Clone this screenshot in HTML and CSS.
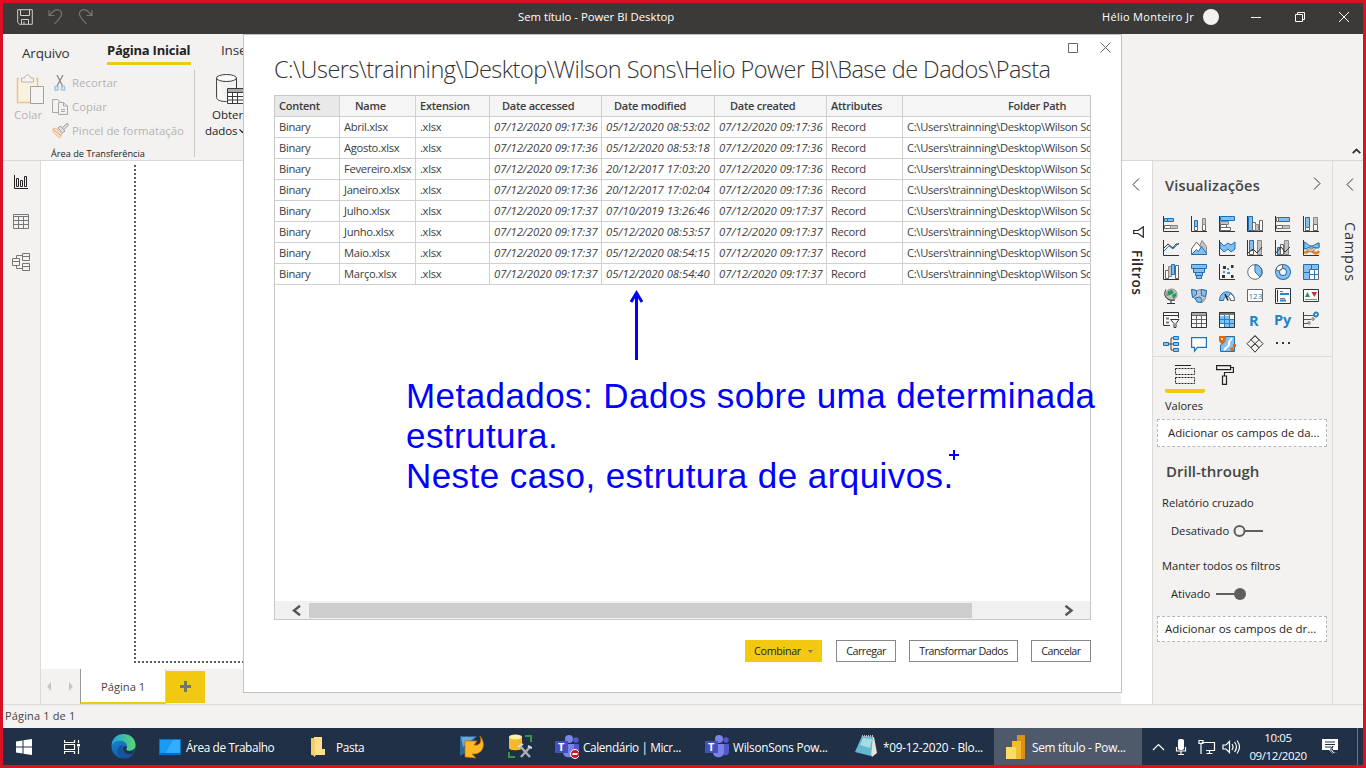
FILE: index.html
```html
<!DOCTYPE html>
<html lang="pt-BR">
<head>
<meta charset="utf-8">
<title>Sem título - Power BI Desktop</title>
<link rel="stylesheet" href="styles.css">
</head>
<body>
<div class="screen">
  <header class="titlebar">
    <div class="quick">
      <svg width="16" height="16" viewBox="0 0 16 16" fill="none" stroke="#d0cfcd"><path d="M.7.7h14.6v14.6H2.5L.7 13.500zM3.500 1v5.500h9V1M4.500 15v-4.500h7V15M7 15v-2.500"/></svg>
      <svg width="15" height="16" viewBox="0 0 15 16" fill="none" stroke="#777573" stroke-width="1.200"><path d="M1 1v5.500h5.500M1 6.500L5 2.500C9-1 14 1 13.500 5.500C13.300 8 11 10 6.500 15"/></svg>
      <svg width="15" height="16" viewBox="0 0 15 16" fill="none" stroke="#777573" stroke-width="1.200"><path d="M14 1v5.500H8.500M14 6.500L10 2.500C6-1 1 1 1.500 5.500C1.700 8 4 10 8.500 15"/></svg>
    </div>
    <div class="app-title">Sem título - Power BI Desktop</div>
    <div class="account"><span>Hélio Monteiro Jr</span><i class="avatar"></i></div>
    <svg class="winctl" width="100" height="12" viewBox="0 0 100 12" fill="none" stroke="#fff"><path d="M0 6.500h10M44.500 3.500h7v7h-7zM46.500 3.500v-2h7v7h-2M88 1l10 10M98 1L88 11"/></svg>
  </header>

  <section class="ribbon">
    <nav class="tabs"><span class="tab file">Arquivo</span><span class="tab home">Página Inicial</span><span class="tab">Inserir</span></nav>
    <div class="tools">
      <div class="paste">
        <svg width="28" height="31" viewBox="0 0 28 31" fill="none"><path d="M1.500 4.500h20V28.500h-20z" stroke="#efc08c" stroke-width="1.500" fill="#fbf1e0"/><path d="M3 4.500h17" stroke="#f2f1f0" stroke-width="3"/><path d="M5.500 8V4h3c.5-4 5.500-4 6 0h3v4z" fill="#f5f4f3" stroke="#b5b4b2"/><path d="M14.500 12.500h13v17h-13z" fill="#f5f4f3" stroke="#a2a1a0"/></svg>
        <span>Colar</span>
      </div>
      <div class="clip">
        <div class="cut"><svg width="16" height="16" viewBox="0 0 16 16" fill="none"><path d="M4 0l5.500 11M10 0L4 11" stroke="#8d8c8a" stroke-width="1.300"/><path d="M2 11.500h3v3.500H2zM8.500 11.500h3v3.500h-3z" stroke="#9dc6e2" stroke-width="1.400"/></svg>Recortar</div>
        <div><svg width="18" height="16" viewBox="0 0 18 16" fill="none" stroke="#aaa9a7"><path d="M6 13.500H.5V.5h5l3 2.500M6.500 3.500h5l4 3.500v8.500h-9zM11.500 3.500V7h4M9 10.500h4M9 12.500h4"/></svg>Copiar</div>
        <div><svg width="18" height="16" viewBox="0 0 18 16" fill="none"><path d="M1 5l4 1 5 5-2.500 4L1 9z" fill="#fbe3cb" stroke="#eeb98a"/><path d="M1 6.500L9 12.500" stroke="#e8a76e"/><path d="M6 5l2.500-2 4.500 5-2.500 2zM10.500 4.500L14.500.8h1.500v1.700l-4 4" fill="#e4e3e1" stroke="#9b9a98"/></svg>Pincel de formatação</div>
        <p>Área de Transferência</p>
      </div>
      <div class="getdata">
        <svg width="28" height="31" viewBox="0 0 28 31" fill="none" stroke="#3b3a39"><path d="M.6 4v19.500c0 2.500 4 4 9 4h1" fill="#fafafa"/><path d="M20.500 4v10"/><ellipse cx="10.500" cy="4" rx="10" ry="3.500" fill="#fafafa"/><path d="M11.500 14.500h17v15h-17z" fill="#fff"/><path d="M12 15h16v3H12z" fill="#aaa" stroke="none"/><path d="M11.500 18.500h17M11.500 22.500h17M11.500 26h17M16.500 18.500v11M21.500 18.500v11"/></svg>
        <span class="l1">Obter</span><span class="l2">dados<svg width="7" height="5" viewBox="0 0 7 5" fill="none" stroke="#222" stroke-width="1.200"><path d="M.5.5l3 3 3-3"/></svg></span>
      </div>
    </div>
    <svg class="collapse" width="9" height="6" viewBox="0 0 9 6" fill="none" stroke="#333" stroke-width="1.800"><path d="M.7 5.200l3.800-3.700 3.800 3.700"/></svg>
  </section>

  <main class="workspace">
    <aside class="rail">
      <svg width="18" height="16" viewBox="0 0 18 16" fill="none" stroke="#222"><path d="M2.500 1v13.500H16M4.500 4.500h2v8h-2zM8.500 6.500h2v6h-2zM12.500 2.500h2v10h-2z"/></svg>
      <svg width="18" height="17" viewBox="0 0 18 17" fill="none" stroke="#777"><path d="M1.500 1.500h15v14h-15zM1.500 3.500h15M1.500 7.500h15M1.500 11.500h15M6.500 3.500v12M11.500 3.500v12"/></svg>
      <svg width="18" height="18" viewBox="0 0 18 18" fill="none" stroke="#777"><path d="M.5 5.500h7v7h-7zM.5 8.500h7M10.500.5h7v7h-7zM10.500 3.500h7M10.500 10.500h7v7h-7zM10.500 13.500h7M4.500 5.500v-3h6M4.500 12.500v3h6"/></svg>
    </aside>
    <section class="report">
      <div class="canvas"><div class="sheet"></div></div>
      <div class="pages">
        <svg width="39" height="10" viewBox="0 0 39 10" fill="#c8c6c4"><path d="M10 0v9L6 4.500zM28 0v9l4-4.500z"/></svg>
        <span class="page">Página 1</span>
        <span class="add"><svg width="11" height="11" viewBox="0 0 11 11"><path d="M5.500 0v11M0 5.500h11" stroke="#75736e" stroke-width="3"/></svg></span>
      </div>
    </section>
    <aside class="filters">
      <svg width="8" height="13" viewBox="0 0 8 13" fill="none" stroke="#333"><path d="M7 .5l-6 6 6 6"/></svg>
      <svg class="funnel" width="11" height="12" viewBox="0 0 11 12" fill="none" stroke="#222" stroke-width="1.200"><path d="M10.300.8v10.400L5 7.500H.7v-3H5z"/></svg>
      <b>Filtros</b>
    </aside>
    <aside class="viz">
      <div class="viz-head"><span>Visualizações</span><svg width="8" height="13" viewBox="0 0 8 13" fill="none" stroke="#333"><path d="M1 .5l6 6-6 6"/></svg></div>
      <div class="gallery">
        <svg viewBox="0 0 16 16"><path class="b" d="M1.500 2.500h3v3h-3z M4.500 2.500h6v3h-6z"/><path class="w" d="M1.500 9.500h6v3h-6z"/><path class="g" d="M7.500 9.500h7v3h-7z"/><path class="k" d="M.5 0v15.500H16"/></svg>
        <svg viewBox="0 0 16 16"><path class="w" d="M3.500 10.500h3v4h-3z"/><path class="b" d="M3.500 4.500h3v6h-3z"/><path class="w" d="M11.500 8.500h3v6h-3z"/><path class="g" d="M11.500 2.500h3v6h-3z"/><path class="k" d="M.5 0v15.500H16"/></svg>
        <svg viewBox="0 0 16 16"><path class="b" d="M1.500.5h14v4h-14z"/><path class="g" d="M1.500 5.500h8v3h-8z"/><path class="w" d="M1.500 8.500h6v3h-6zM1.500 11.500h10v3h-10z"/><path class="k" d="M.5 0v15.500H16"/></svg>
        <svg viewBox="0 0 16 16"><path class="b" d="M1.500.5h4v14h-4z"/><path class="w" d="M5.500 6.500h3v8h-3z"/><path class="g" d="M8.500 8.500h3v6h-3z"/><path class="w" d="M12.500 4.500h3v10h-3z"/><path class="k" d="M.5 0v15.500H16"/></svg>
        <svg viewBox="0 0 16 16"><path class="b" d="M3.500 1.500h11v4h-11z"/><path class="w" d="M1.500 1.500h2v4h-2z"/><path class="g" d="M7.500 9.500h7v3h-7z"/><path class="w" d="M1.500 9.500h6v3h-6z"/><path class="k" d="M.5 0v15.500H16"/></svg>
        <svg viewBox="0 0 16 16"><path class="b" d="M2.500 1.500h4v10h-4z"/><path class="w" d="M2.500 11.500h4v3h-4z"/><path class="g" d="M10.500 1.500h4v7h-4z"/><path class="w" d="M10.500 8.500h4v6h-4z"/><path class="k" d="M.5 0v15.500H16"/></svg>

        <svg viewBox="0 0 16 16"><path class="bl" d="M1 11l5-5 4 3 6-6"/><path class="k" d="M1 8l4-4 5 4 3-4h3M.5 0v15.500H16"/></svg>
        <svg viewBox="0 0 16 16"><path class="g" d="M5 14.500L11 .5l4.500 6v8z"/><path class="w" d="M.5 9l5-7 5 6-4 6.500h-6z"/><path class="b" d="M.5 14.500l5-5 2 2 3-5 5 7v1z"/></svg>
        <svg viewBox="0 0 16 16"><path class="b" d="M1 2l4 4 4-3 3 2 4-3v7l-4 3-3-3-4 3-4-4z"/><path class="k" d="M.5 0v15.500H16"/></svg>
        <svg viewBox="0 0 16 16"><path class="b" d="M2.500.5h4v10h-4z"/><path class="w" d="M2.500 10.500h4v4h-4z"/><path class="g" d="M10.500.5h4v14h-4z"/><path class="k" d="M1 13l5-4 4 4 5-6M.5 0v15.500H16"/></svg>
        <svg viewBox="0 0 16 16"><path class="b" d="M2.500 7.500h3v7h-3z"/><path class="w" d="M5.500 4.500h3v10h-3z"/><path class="g" d="M9.500.5h4v14h-4z"/><path class="k" d="M1 13l5-6 4 5 5-5M.5 0v15.500H16"/></svg>
        <svg viewBox="0 0 16 16"><path d="M1 12c4 2 5-4 8-1s5 3 7 0" fill="none" stroke="#e8811c" stroke-width="3"/><path class="g" d="M1 4c4 0 4 5 7 5s4-6 8-6v4c-4 0-5 5-8 5s-4-4-7-4z"/><path class="b" d="M1 2c4 1 4 4 7 4s4-2 8-3v5c-4 0-5-1-8-1s-4 2-7 2z"/><path class="k" d="M.5 0v15.500H16"/></svg>

        <svg viewBox="0 0 16 16"><path class="w" d="M2.500 6.500h3v8h-3z"/><path class="g" d="M5.500 2.500h3v10h-3z"/><path class="b" d="M8.500.5h3v10h-3z"/><path class="w" d="M12.500 1.500h3v13h-3z"/><path class="k" d="M.5 0v15.500H16"/></svg>
        <svg viewBox="0 0 16 16"><path class="b" d="M.5.5h15v4H.5zM2.500 4.500h11v4h-11zM4.500 8.500h7v3h-7zM5.500 11.500h5v3h-5z"/></svg>
        <svg viewBox="0 0 16 16"><g fill="#333"><path d="M4 2h3v3H4zM12 1h2.500v3H12zM3 11h3v3H3zM12 11h2.500v3H12z"/></g><path d="M8 4h2v2H8zM4 7h2v2H4zM8 8h3v2H8z" fill="#3d94d6"/><path class="k" d="M.5 0v15.500H16"/></svg>
        <svg viewBox="0 0 16 16"><circle class="w" cx="8" cy="8" r="7.300"/><path class="b" d="M8 .7a7.300 7.300 0 0 1 5 12.300L8 8z"/></svg>
        <svg viewBox="0 0 16 16"><circle cx="8" cy="8" r="5.500" fill="none" stroke="#1e70b5" stroke-width="5"/><circle cx="8" cy="8" r="5.500" fill="none" stroke="#84bff0" stroke-width="3.200"/><path class="w" d="M7.500.5A7 7 0 0 0 1 6l3.500 1A4 4 0 0 1 7.500 4.500z"/></svg>
        <svg viewBox="0 0 16 16"><path class="b" d="M.5.500h8v8h-8zM.5 8.500h6v7h-6zM8.500.5h7v5h-7z"/><path class="w" d="M6.500 5.500h9v10h-9z"/><path class="bl" d="M6.500 10.500h9M11.500 5.500v10"/></svg>

        <svg viewBox="0 0 16 16"><circle cx="8.500" cy="6.500" r="5.500" class="g"/><path d="M5 3l4-1 2 3-4 2-3 1zM9 7l4-2v3l-3 3z" fill="#239b56"/><path class="k" d="M3 1.500C-1 8 5 14 12 12M8 12.500v3M4 15.500h8"/></svg>
        <svg viewBox="0 0 16 16"><path class="g" d="M.5 1.500l5 1 4-1 6 1-1 8-3 4-5-1-5-5z"/><path class="b" d="M.5 1.500l5 1v4l-4 3zM10 1.500l5.500 1-1 6-4-1zM4 10l5-1 2 3-1 2.500-4-.5z"/></svg>
        <svg viewBox="0 0 16 16"><path class="b" d="M.5 12.500C.5 1 15.500 1 15.500 12.500h-4C11 7 5 7 4.500 12.500z"/><path class="w" d="M11 5.500c3 1 4.500 4 4.500 7h-4c0-2-1-3-2-4z"/><path d="M6 6l3 6.500" stroke="#222" stroke-width="1.500"/></svg>
        <svg viewBox="0 0 16 16"><path class="w" d="M.5 1.500h15v12H.5z"/><text x="1.500" y="10.500" font-size="8" fill="#1480c5">123</text></svg>
        <svg viewBox="0 0 16 16"><path class="k w" d="M.5.5h15v15H.5z"/><path d="M5 3.500h3M5 10.500h5" stroke="#777"/><path d="M5 6h9M5 12.500h6" stroke="#2b83c8" stroke-width="2"/><path class="k" d="M2.500 2v12"/></svg>
        <svg viewBox="0 0 16 16"><path class="k w" d="M.5 1.500h15v12H.5z"/><path d="M2 9l2.500-5L7 9z" fill="#219653"/><path d="M8.500 4H14l-2.700 5z" fill="#dc2635"/><path d="M2 11.500h12" stroke="#888"/></svg>

        <svg viewBox="0 0 16 16"><path class="k w" d="M7 13.500H.5V.5h15V6M.5 3.500h15"/><path d="M3 6.500h3M3 10.500h3" stroke="#777" stroke-width="2"/><path class="k w" d="M7.500 7.500h8.500l-3 4v4h-2v-4z"/></svg>
        <svg viewBox="0 0 16 16"><path class="k w" d="M.5.5h15v15H.5z"/><path d="M1 2h14" stroke="#aaa" stroke-width="2"/><path d="M1 3.500h14M1 7.500h14M1 11.500h14M5.500 3v12M10.500 3v12" stroke="#666"/></svg>
        <svg viewBox="0 0 16 16"><path class="w" d="M.5.5h15v15H.5z"/><path d="M1 4h9v7H1zM6 7h9v8H6z" fill="#84bff0"/><path d="M1 2h14" stroke="#777" stroke-width="2"/><path class="bl" d="M.5 7.500h15M.5 11.500h15M5.500 3v12M10.500 3v12"/><path class="k" d="M.5.5h15M.5.5v15h15v-15"/></svg>
        <svg viewBox="0 0 16 16"><text x="2" y="13.500" font-size="14.500" font-weight="bold" fill="#2185c5">R</text></svg>
        <svg viewBox="0 0 16 16"><text x="-1" y="12.500" font-size="14.500" font-weight="bold" fill="#2185c5">Py</text></svg>
        <svg viewBox="0 0 16 16"><path class="k" d="M.5 0v15.500H16"/><path d="M1 3.500h10M1 7.500h7M1 11.500h4" stroke="#555"/><circle cx="13" cy="2.500" r="2" fill="none" stroke="#2185c5" stroke-width="1.800"/><circle cx="10" cy="7" r="1.200" class="w"/><circle cx="6" cy="11" r="1.200" class="w"/></svg>

        <svg viewBox="0 0 16 16"><path class="b" d="M.5 6.500h5v3h-5zM10.500.5h5v3h-5zM10.500 6.500h5v3h-5zM10.500 12.500h5v3h-5z"/><path d="M5.500 8h5M10 2H8v12h2" fill="none" stroke="#444"/></svg>
        <svg viewBox="0 0 16 16"><path d="M.6 1.600h14.800v9.800H6.500L3.500 15v-3.600H.6z" fill="#fff" stroke="#1c73b9" stroke-width="1.200"/></svg>
        <svg viewBox="0 0 16 16"><path class="b" d="M6.500.5h9v15h-14V9l4-3z"/><path d="M13 2l-3 4v3l-5 5" stroke="#fff" stroke-width="2" fill="none"/><path d="M0 0h6v5L3 9 0 5zM11 12l3-1 1 4h-3zM14 8h3v3h-3z" fill="#dd6b10"/><circle cx="3" cy="3" r="1" fill="#fff"/></svg>
        <svg viewBox="0 0 18 18" class="big"><path class="k" d="M9 .7l4 4-8 8-4-4zM9 .7l-4 4 8 8 4-4zM9 8.700l4 4-4 4.500-4-4.500z" stroke-width="1.300"/></svg>
        <svg viewBox="0 0 16 16"><path d="M1 6h2v2H1zM7 6h2v2H7zM13 6h2v2h-2z" fill="#333"/></svg>
      </div>
      <div class="modes">
        <span class="on"><svg width="20" height="20" viewBox="0 0 20 20" fill="none" stroke="#222"><path d="M0 .5h16"/><path stroke-dasharray="2 1" d="M.5 3.500h19v6H.5zM.5 12.500h19v6H.5z"/></svg></span>
        <svg width="18" height="20" viewBox="0 0 18 20" fill="none" stroke="#222" stroke-width="1.200"><path d="M.6.6h14v4H.6zM15 2.500h2.400v5H8.500V11M6.500 11h4v8.400h-4z"/></svg>
      </div>
      <p class="lbl values">Valores</p>
      <div class="well first">Adicionar os campos de da...</div>
      <h3>Drill-through</h3>
      <p class="lbl">Relatório cruzado</p>
      <p class="toggle"><span>Desativado</span><svg width="31" height="14" viewBox="0 0 31 14" fill="none" stroke="#605e5c" stroke-width="2"><path d="M12 7h18"/><circle cx="6.500" cy="7" r="5"/></svg></p>
      <p class="lbl keep">Manter todos os filtros</p>
      <p class="toggle second"><span>Ativado</span><svg width="31" height="14" viewBox="0 0 31 14"><path d="M0 7h20" stroke="#605e5c" stroke-width="2"/><circle cx="24" cy="7" r="6" fill="#605e5c"/></svg></p>
      <div class="well">Adicionar os campos de dr...</div>
    </aside>
    <aside class="fields">
      <svg width="8" height="13" viewBox="0 0 8 13" fill="none" stroke="#333"><path d="M7 .5l-6 6 6 6"/></svg>
      <b>Campos</b>
    </aside>
  </main>

  <footer class="status">Página 1 de 1</footer>

  <nav class="taskbar">
    <svg width="16" height="16" viewBox="0 0 16 16" fill="#fff"><path d="M0 2.500l6.500-1v6H0zM7.500 1.300L16 0v7.500H7.500zM0 8.500h6.500v6l-6.500-1zM7.500 8.500H16V16l-8.500-1.300z"/></svg>
    <svg width="17" height="16" viewBox="0 0 17 16" fill="none" stroke="#fff"><path d="M.5 1v2.500h10V1M.5 5.500h10v5H.5zM.5 15v-2.500h10V15M14.500 1v3M14.500 8v7" stroke-width="1.200"/><path d="M13 5h3v2.500h-3z" fill="#fff" stroke="none"/></svg>
    <svg width="25" height="25" viewBox="0 0 25 25"><defs><linearGradient id="e1" x2="1"><stop stop-color="#1fa5e3"/><stop offset="1" stop-color="#59d66b"/></linearGradient><linearGradient id="e2" y2="1" x2=".4"><stop stop-color="#1d8ad8"/><stop offset="1" stop-color="#0e5ca8"/></linearGradient></defs><circle cx="12.500" cy="12.500" r="12" fill="url(#e2)"/><path d="M.6 11C2-4 24-3 24.500 11c.2 5-4.500 7-8.500 5.500-2-1 0-2 0-4C16 5 4 5 .6 11z" fill="url(#e1)"/><path d="M12 11c-3 4 1 10 10.500 8-3 5-8 6-11 5C4 21 6 11 12 11z" fill="#1553a0"/><path d="M16 12.500c0 2-2 3 0 4 3 1 6 0 8-2.500-1 3-2 5-3 5.500-5 2-10-2-9-7z" fill="#203047"/></svg>
    <span class="task desk"><svg width="22" height="16" viewBox="0 0 22 16"><path d="M.5.5h21v15H.5z" fill="#159cf8" stroke="#0874c7"/><path d="M14 1h7v14H6z" fill="#35adff"/><path d="M1 14.500h20" stroke="#0765b1"/></svg><span>Área de Trabalho</span></span>
    <span class="task folder"><svg width="15" height="20" viewBox="0 0 15 20"><path d="M0 1h10v17H0z" fill="#e8b84a"/><path d="M3 0h8v12h3v6H5l-2 2z" fill="#ffe08a"/><path d="M0 1l4 2v17l-4-3z" fill="#f5cc68"/></svg><span>Pasta</span></span>
    <svg width="24" height="24" viewBox="0 0 24 24"><path d="M0 1h17l-4 5-7 2-1 10-5 3z" fill="#2a689f"/><path d="M1 2h14L3 12z" fill="#6fa7d1"/><path d="M5 6h12l-3 4c6 1 8-3 6-9 6 7 4 17-5 18h-3l4 4-11-1z" fill="#fdb924" stroke="#bd6c05" stroke-width=".7"/></svg>
    <svg width="24" height="25" viewBox="0 0 24 25"><path d="M1 3v11c0 3 13 3 13 0V3z" fill="#f5b92a"/><ellipse cx="7.500" cy="3" rx="6.500" ry="2.500" fill="#fff0a7"/><path d="M17 2h6v6M1 18v5h6" fill="none" stroke="#329645" stroke-width="2"/><path d="M13 23l9-10M12 12l10 11" stroke="#a9aeb2" stroke-width="2.500"/><path d="M10 13l5-3M20 12l4 2" stroke="#ddd" stroke-width="2"/></svg>
    <span class="task teams"><svg width="24" height="24" viewBox="0 0 24 24"><circle cx="14" cy="4" r="4" fill="#7b83eb"/><circle cx="21" cy="5" r="2.700" fill="#5059c9"/><path d="M18 9h6v8c0 4-5 4-6 2z" fill="#5059c9"/><path d="M8 9h11v8c0 7-11 7-11 0z" fill="#7b83eb"/><path d="M0 6h13v12H0z" fill="#4650bd"/><text x="3" y="16" font-size="11" font-weight="bold" fill="#fff">T</text><circle cx="20" cy="19" r="4.500" fill="#c5172c" stroke="#fff"/><path d="M17.500 19h5" stroke="#fff" stroke-width="2"/></svg><span>Calendário | Micr...</span></span>
    <span class="task teams2"><svg width="24" height="24" viewBox="0 0 24 24"><circle cx="14" cy="4" r="4" fill="#7b83eb"/><circle cx="21" cy="5" r="2.700" fill="#5059c9"/><path d="M18 9h6v8c0 4-5 4-6 2z" fill="#5059c9"/><path d="M8 9h11v8c0 7-11 7-11 0z" fill="#7b83eb"/><path d="M0 6h13v12H0z" fill="#4650bd"/><text x="3" y="16" font-size="11" font-weight="bold" fill="#fff">T</text></svg><span>WilsonSons Pow...</span></span>
    <span class="task note"><svg width="23" height="23" viewBox="0 0 23 23"><path d="M7 1l12 1 3 16-5 4z" fill="#e8e4d8"/><path d="M7 1l11 1-2 19L0 17z" fill="#62b9cf"/><path d="M8 3l9 1-2 9-10-3z" fill="#a7dce5"/><path d="M7 1h12" stroke="#bbb" stroke-width="2" stroke-dasharray="1 1"/></svg><span>*09-12-2020 - Blo...</span></span>
    <span class="task active"><svg width="20" height="24" viewBox="0 0 20 24"><path d="M11 0h8v24h-8z" fill="#d99213"/><path d="M6 6h9v18H6z" fill="#f2bd2b"/><path d="M0 12h10v12H0z" fill="#fbdd61"/></svg><span>Sem título - Pow...</span></span>
    <span class="tray">
      <svg width="90" height="18" viewBox="0 0 90 18" fill="none" stroke="#fff" stroke-width="1.200"><path d="M1 12l5.500-5.500L12 12"/><rect x="26" y="1" width="6" height="11" rx="2" fill="#fff" stroke="none"/><path d="M24.500 9v4h9V9M29 13v3M26 16.500h6M49.500 4.500h13v8H54M54.500 15.500h6M57.500 12.500v3M47 2.500h4v3h-4zM49 6v10M71 7h3l3.500-3.500v11L74 11h-3zM80 6q2 3 0 6M82.500 4q4 5 0 10M85 2.500q5 6.500 0 13"/></svg>
      <span class="clock">10:05<br>09/12/2020</span>
      <svg width="17" height="17" viewBox="0 0 17 17"><path d="M0 1h16v11h-5v4l-4-4H0z" fill="#fff"/><path d="M3 4h10M3 6.500h10M3 9h6" stroke="#203047"/><path d="M11 8a4 4 0 1 0 5 6 4 4 0 0 1-5-6z" fill="#fff" stroke="#203047"/></svg>
      <i class="peek"></i>
    </span>
  </nav>

  <section class="dialog">
    <svg class="dlg-ctl" width="44" height="12" viewBox="0 0 44 12" fill="none" stroke="#666"><path d="M.5 1.500h9v9h-9zM32.500.5l10 10M42.500.5l-10 10"/></svg>
    <h1>C:\Users\trainning\Desktop\Wilson Sons\Helio Power BI\Base de Dados\Pasta</h1>
    <div class="grid">
      <table>
        <colgroup><col class="c1"><col class="c2"><col class="c3"><col class="c4"><col class="c5"><col class="c4"><col class="c2"><col class="c6"></colgroup>
        <tr><th class="sel">Content</th><th class="name">Name</th><th>Extension</th><th class="date">Date accessed</th><th class="date">Date modified</th><th class="date created">Date created</th><th>Attributes</th><th class="path">Folder Path</th></tr>
        <tr><td>Binary</td><td>Abril.xlsx</td><td>.xlsx</td><td class="d">07/12/2020 09:17:36</td><td class="d">05/12/2020 08:53:02</td><td class="d">07/12/2020 09:17:36</td><td>Record</td><td>C:\Users\trainning\Desktop\Wilson Sons</td></tr>
        <tr><td>Binary</td><td>Agosto.xlsx</td><td>.xlsx</td><td class="d">07/12/2020 09:17:36</td><td class="d">05/12/2020 08:53:18</td><td class="d">07/12/2020 09:17:36</td><td>Record</td><td>C:\Users\trainning\Desktop\Wilson Sons</td></tr>
        <tr><td>Binary</td><td>Fevereiro.xlsx</td><td>.xlsx</td><td class="d">07/12/2020 09:17:36</td><td class="d">20/12/2017 17:03:20</td><td class="d">07/12/2020 09:17:36</td><td>Record</td><td>C:\Users\trainning\Desktop\Wilson Sons</td></tr>
        <tr><td>Binary</td><td>Janeiro.xlsx</td><td>.xlsx</td><td class="d">07/12/2020 09:17:36</td><td class="d">20/12/2017 17:02:04</td><td class="d">07/12/2020 09:17:36</td><td>Record</td><td>C:\Users\trainning\Desktop\Wilson Sons</td></tr>
        <tr><td>Binary</td><td>Julho.xlsx</td><td>.xlsx</td><td class="d">07/12/2020 09:17:37</td><td class="d">07/10/2019 13:26:46</td><td class="d">07/12/2020 09:17:37</td><td>Record</td><td>C:\Users\trainning\Desktop\Wilson Sons</td></tr>
        <tr><td>Binary</td><td>Junho.xlsx</td><td>.xlsx</td><td class="d">07/12/2020 09:17:37</td><td class="d">05/12/2020 08:53:57</td><td class="d">07/12/2020 09:17:37</td><td>Record</td><td>C:\Users\trainning\Desktop\Wilson Sons</td></tr>
        <tr><td>Binary</td><td>Maio.xlsx</td><td>.xlsx</td><td class="d">07/12/2020 09:17:37</td><td class="d">05/12/2020 08:54:15</td><td class="d">07/12/2020 09:17:37</td><td>Record</td><td>C:\Users\trainning\Desktop\Wilson Sons</td></tr>
        <tr><td>Binary</td><td>Março.xlsx</td><td>.xlsx</td><td class="d">07/12/2020 09:17:37</td><td class="d">05/12/2020 08:54:40</td><td class="d">07/12/2020 09:17:37</td><td>Record</td><td>C:\Users\trainning\Desktop\Wilson Sons</td></tr>
      </table>
      <div class="scroll">
        <svg width="10" height="11" viewBox="0 0 10 11" fill="none" stroke="#555" stroke-width="2.400"><path d="M9 .8L3 5.500l6 4.700"/></svg>
        <i></i>
        <svg width="10" height="11" viewBox="0 0 10 11" fill="none" stroke="#555" stroke-width="2.400"><path d="M1.500.8l6 4.700-6 4.700"/></svg>
      </div>
    </div>
    <div class="buttons"><span class="btn primary">Combinar<svg width="5" height="3" viewBox="0 0 5 3"><path d="M0 0h5L2.500 3z" fill="#777"/></svg></span><span class="btn b2">Carregar</span><span class="btn b3">Transformar Dados</span><span class="btn b4">Cancelar</span></div>
  </section>

  <svg class="arrow" width="16" height="72" viewBox="0 0 16 72" fill="none" stroke="#00f" stroke-width="3"><path d="M7.500 71V4M2 13l5.500-9L13 13"/></svg>
  <div class="annotation">Metadados: Dados sobre uma determinada<br>estrutura.<br>Neste caso, estrutura de arquivos.</div>
  <svg class="cursor" width="10" height="10" viewBox="0 0 10 10" stroke="#00f" stroke-width="2"><path d="M5 0v10M0 5h10"/></svg>
</div>
</body>
</html>
```
FILE: styles.css
```css
* { box-sizing: border-box; }
body { margin: 0; overflow: hidden; font: 11px/16px "Open Sans", "Noto Sans", sans-serif; color: #252423; }
p, h1, h3 { margin: 0; font-weight: 400; }
svg { display: block; flex: none; }
.screen { position: relative; width: 1366px; height: 768px; border: 3px solid #d81224; background: #f3f2f1; display: flex; flex-direction: column; white-space: nowrap; }

.titlebar { height: 31px; background: #3b3a38; color: #fff; display: grid; grid-template-columns: 515px 584px 149px 112px; align-items: center; padding-bottom: 3px; }
.quick { display: flex; gap: 15px; padding-left: 14px; }
.app-title { font-size: 11.3px; }
.account { display: flex; align-items: center; gap: 9px; letter-spacing: .3px; }
.avatar { width: 16px; height: 16px; border-radius: 50%; background: #f3f2f1; }

.ribbon { height: 127px; position: relative; border-bottom: 1px solid #d9d8d6; display: flex; flex-direction: column; }
.tabs { height: 36px; display: flex; font-size: 13.5px; letter-spacing: -.2px; padding: 7px 0 0 19px; color: #333; }
.tab { line-height: 18px; height: 24px; }
.file { width: 85px; padding-top: 3px; }
.home { width: 84px; margin-right: 30px; font-weight: 700; color: #222; height: 24px; border-bottom: 3px solid #f2c811; font-size: 13px; letter-spacing: -.22px; }
.tools { display: flex; color: #b5b3b1; }
.paste { width: 47px; padding: 4px 0 0 13px; }
.paste span { display: block; margin: 2px 0 0 -2px; font-size: 11.5px; }
.clip { width: 145px; height: 87px; border-right: 1px solid #c8c6c4; padding-top: 1px; }
.clip div { display: flex; align-items: center; height: 24px; font-size: 11.4px; }
.clip svg { margin: 0 2px; width: 18px; }
.clip .cut svg { width: 16px; margin-left: 3px; margin-right: 3px; }
.clip p { font-size: 9.2px; line-height: 14px; margin-left: 1px; color: #222; padding-top: 4px; }
.getdata { padding: 4px 0 0 21px; color: #222; font-size: 11.5px; }
.getdata span { display: block; }
.l1 { margin: 2px 0 0 -4px; }
.getdata .l2 { margin-left: -11px; display: flex; align-items: center; gap: 2px; letter-spacing: -.1px; }
.collapse { position: absolute; right: 2px; bottom: 6px; }

.workspace { flex: 1; display: flex; min-height: 0; }
.rail { width: 38px; border-right: 1px solid #dcdbd9; display: flex; flex-direction: column; padding: 13px 0 0 9px; gap: 23px; }
.report { width: 1080px; display: flex; flex-direction: column; background: #fff; }
.canvas { flex: 1; padding: 4px 0 0 93px; }
.sheet { height: 498px; background: repeating-linear-gradient(#605e5c 0 2px, transparent 2px 4px) 0 0/2px 100% no-repeat, repeating-linear-gradient(90deg, #605e5c 0 2px, transparent 2px 4px) 0 100%/100% 2px no-repeat; }
.pages { height: 35px; background: #f3f2f1; display: flex; align-items: center; }
.page { width: 86px; height: 35px; background: #fff; border: 1px solid #d0cfcd; border-width: 0 1px 2px; border-left-color: #999; border-bottom-color: #f2c811; line-height: 35px; padding-left: 20px; font-size: 11.2px; color: #444; }
.add { width: 39px; height: 32px; background: #f2c811; display: flex; align-items: center; justify-content: center; }
.filters { width: 31px; background: #fff; padding: 17px 0 0 11px; }
.funnel { margin: 35px 0 0 1px; }
.filters b, .fields b { display: block; writing-mode: vertical-rl; line-height: 16px; }
.filters b { margin: 12px 0 0 -3px; font-size: 13.500px; font-weight: 600; letter-spacing: .7px; }
.viz { width: 181px; border: 1px solid #dcdbd9; border-width: 0 1px; }
.viz-head { height: 55px; padding: 16px 11px 0 12px; display: flex; justify-content: space-between; font-size: 14.5px; letter-spacing: .17px; font-weight: 600; color: #444; line-height: 18px; }
.gallery { height: 141px; padding-left: 10px; display: grid; grid-template: repeat(6, 24px) / repeat(6, 28px); border-bottom: 1px solid #dcdbd9; }
.gallery svg { width: 16px; height: 16px; overflow: visible; }
.gallery .big { width: 18px; height: 18px; margin: -1px; }
.w, .g, .b, .k, .bl { stroke-width: 1; }
.w { fill: #fff; stroke: #666; }
.g { fill: #c4c3c1; stroke: #888; }
.b { fill: #84bff0; stroke: #1e70b5; }
.k { fill: none; stroke: #333; }
.k.w { fill: #fafafa; }
.bl { fill: none; stroke: #1e82c8; }
.modes { display: flex; height: 36px; padding: 8px 0 0 12px; gap: 11px; }
.on { width: 40px; height: 28px; padding-left: 10px; background: linear-gradient(#f2c811, #f2c811) 0 100%/40px 4px no-repeat; border-radius: 2px; }
.lbl { padding-left: 9px; font-size: 11.200px; }
.values { padding: 5px 0 0 12px; font-size: 11px; }
.well { margin: 0 5px 0 4px; height: 26px; border: 1px dashed #bbb9b7; background: #fff; padding-left: 7px; line-height: 24px; font-size: 11.500px; }
.well.first { height: 28px; margin-top: 5px; padding-left: 10px; line-height: 26px; font-size: 11.4px; }
.viz h3 { font-size: 15px; font-weight: 600; color: #444; line-height: 20px; padding: 14px 0 0 13px; margin-bottom: 14px; }
.toggle { display: flex; align-items: center; height: 16px; margin: 12px 0 0 18px; gap: 4px; font-size: 11.200px; }
.keep { margin-top: 19px; }
.second { margin-top: 12px; margin-bottom: 14px; gap: 6px; }
.fields { width: 30px; padding: 17px 0 0 13px; color: #333; }
.fields b { margin: 31px 0 0 -4px; font-weight: 500; font-size: 14.500px; letter-spacing: .8px; }

.status { height: 24px; border-top: 1px solid #dcdbd9; padding: 3px 0 0 2px; color: #444; letter-spacing: .15px; }
.taskbar { height: 37px; background: #203047; color: #fff; display: grid; grid-template-columns: 48px 47px 48px 152px 149px 48px 47px 150px 150px 139px 148px 1fr; padding-left: 13px; align-items: center; font-size: 11.800px; letter-spacing: -.38px; }
.task { display: flex; align-items: center; gap: 5px; }
.folder { gap: 10px; }
.teams, .teams2 { gap: 4px; }
.teams2, .note, .active { letter-spacing: -.25px; }
.active { height: 37px; background: #4e5a6b; padding-left: 12px; gap: 6px; }
.tray { display: flex; align-items: center; padding-left: 10px; }
.clock { width: 70px; margin: 0 9px 0 1px; text-align: center; line-height: 18px; font-size: 11.500px; }
.peek { height: 37px; border-left: 1px solid #68788b; margin-left: 18px; }

.dialog { position: absolute; left: 240px; top: 31px; width: 879px; height: 659px; background: #fff; border: 1px solid #c3c2c0; padding: 7px 30px 0; display: flex; flex-direction: column; }
.dlg-ctl { margin: 0 -21px 0 auto; }
.dialog h1 { font-size: 23.5px; letter-spacing: -.53px; font-weight: 300; line-height: 30px; color: #333; }
.grid { margin-top: 11px; width: 817px; height: 525px; border: 1px solid #c8c8c8; overflow: hidden; display: flex; flex-direction: column; justify-content: space-between; }
table { table-layout: fixed; width: 817px; border-collapse: separate; border-spacing: 0; color: #3c3c3c; }
.c1 { width: 65px; } .c2 { width: 76px; } .c3 { width: 74px; } .c4 { width: 112px; } .c5 { width: 113px; } .c6 { width: 189px; }
th, td { height: 21px; padding: 0 0 0 4px; border: 1px solid #d0d0d0; border-width: 0 1px 1px 0; text-align: left; overflow: hidden; line-height: 18px; font-size: 11.2px; letter-spacing: -.32px; }
th { background: #f5f5f5; font-weight: 600; font-size: 11px; letter-spacing: -.25px; }
.sel { background: #e9e9e9; }
.name { padding-left: 15px; }
.date { padding-left: 12px; }
.created { padding-left: 15px; }
.path { padding-left: 105px; }
.d { font-style: italic; font-size: 11.3px; letter-spacing: 0; }
.scroll { height: 18px; background: #f0f0f0; display: flex; align-items: center; padding-left: 16px; }
.scroll i { width: 663px; height: 15px; background: #cdcdcd; margin: 0 92px 0 8px; }
.buttons { margin-top: 20px; display: flex; width: 817px; justify-content: flex-end; }
.btn { height: 22px; border: 1px solid #888; line-height: 20px; text-align: center; font-size: 10.700px; letter-spacing: -.5px; }
.primary { width: 77px; background: #f2c811; border-color: #f2c811; margin-right: 14px; display: flex; align-items: center; justify-content: center; gap: 7px; letter-spacing: -.3px; }
.b2 { width: 60px; margin-right: 13px; } .b3 { width: 109px; margin-right: 13px; } .b4 { width: 60px; }

.arrow { position: absolute; left: 626px; top: 286px; }
.annotation { position: absolute; left: 403px; top: 373px; font: 35px/40px "Liberation Sans", sans-serif; color: #00f; letter-spacing: .43px; }
.cursor { position: absolute; left: 946px; top: 447px; }
```
